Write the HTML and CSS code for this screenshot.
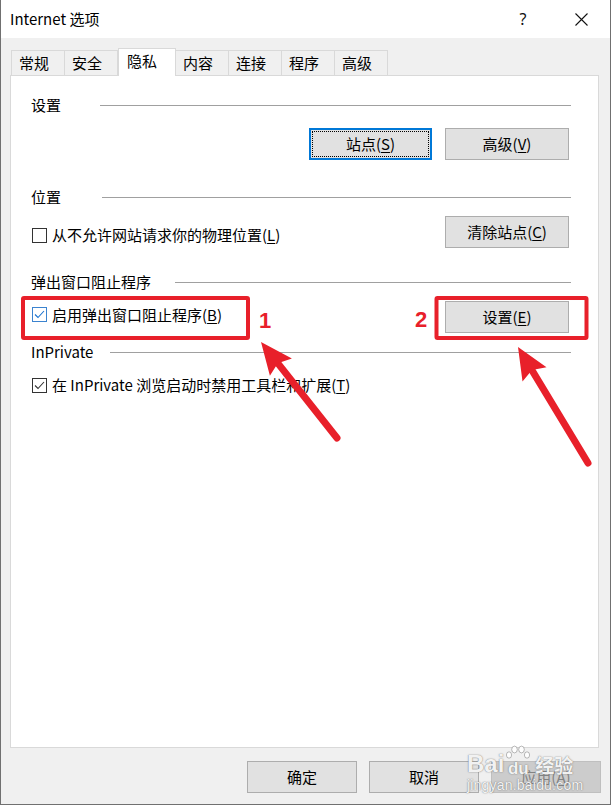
FILE: index.html
```html
<!DOCTYPE html>
<html lang="zh-CN">
<head>
<meta charset="utf-8">
<title>Internet 选项</title>
<link rel="stylesheet" href="styles.css">
</head>
<body>
<div class="window">
  <div class="titlebar">
    <span class="title">Internet 选项</span>
    <span class="help">?</span>
    <svg class="close" width="13" height="13" viewBox="0 0 13 13"><path d="M0.5 0.5 L12.5 12.5 M12.5 0.5 L0.5 12.5" stroke="#111" stroke-width="1.1" fill="none"/></svg>
  </div>

  <div class="tabs">
    <div class="tab first">常规</div>
    <div class="tab">安全</div>
    <div class="tab active">隐私</div>
    <div class="tab after-active">内容</div>
    <div class="tab">连接</div>
    <div class="tab">程序</div>
    <div class="tab">高级</div>
  </div>

  <div class="panel">
    <div class="group-head gh-1"><span class="label l-settings">设置</span><span class="rule"></span></div>
    <div class="row row-right r-1">
      <div class="btn btn-default w-sites">站点(<u>S</u>)</div>
      <div class="btn w-adv">高级(<u>V</u>)</div>
    </div>

    <div class="group-head gh-2"><span class="label l-location">位置</span><span class="rule"></span></div>
    <div class="row row-split r-2">
      <label class="check check-low"><span class="box"></span><span>从不允许网站请求你的物理位置(<u>L</u>)</span></label>
      <div class="btn w-side">清除站点(<u>C</u>)</div>
    </div>

    <div class="group-head gh-3"><span class="label l-popup">弹出窗口阻止程序</span><span class="rule"></span></div>
    <div class="row row-split r-3">
      <label class="check check-high"><span class="box checked focus"><svg width="13" height="13" viewBox="0 0 13 13"><path d="M2 6.5 L5 9.5 L11 3" stroke="#1a73d0" stroke-width="1.1" fill="none"/></svg></span><span>启用弹出窗口阻止程序(<u>B</u>)</span></label>
      <div class="btn w-side">设置(<u>E</u>)</div>
    </div>

    <div class="group-head gh-4"><span class="label l-inprivate">InPrivate</span><span class="rule"></span></div>
    <div class="row r-4">
      <label class="check"><span class="box checked"><svg width="13" height="13" viewBox="0 0 13 13"><path d="M2 6.5 L5 9.5 L11 3" stroke="#333" stroke-width="1.1" fill="none"/></svg></span><span>在 InPrivate 浏览启动时禁用工具栏和扩展(<u>T</u>)</span></label>
    </div>
  </div>

  <div class="footer">
    <div class="btn dlg">确定</div>
    <div class="btn dlg">取消</div>
    <div class="btn dlg disabled">应用(<u>A</u>)</div>
  </div>

  <svg class="annot" width="611" height="805" viewBox="0 0 611 805">
    <rect x="23" y="298" width="225" height="40" rx="1" fill="none" stroke="#e8202a" stroke-width="4"/>
    <rect x="436.5" y="298" width="150" height="40" rx="1" fill="none" stroke="#e8202a" stroke-width="4"/>
    <text x="259" y="328" class="num">1</text>
    <text x="415" y="327" class="num">2</text>
    <line x1="273.4" y1="357.7" x2="337" y2="438" stroke="#e8202a" stroke-width="7" stroke-linecap="round"/>
    <polygon points="261,342 269.9,375.8 277.8,363.2 291.9,358.4" fill="#e8202a"/>
    <line x1="528.3" y1="364.1" x2="588" y2="463" stroke="#e8202a" stroke-width="7" stroke-linecap="round"/>
    <polygon points="518,347 522.5,381.6 532,370.1 546.5,367.2" fill="#e8202a"/>
  </svg>

  <div class="watermark">
    <div class="wm-top">
      <span class="wm-bai">Bai</span>
      <span class="wm-paw">
        <svg width="26" height="16" viewBox="0 0 26 16">
          <ellipse cx="4" cy="10" rx="2.6" ry="3.2" fill="rgba(255,255,255,0.9)" stroke="rgba(110,110,110,0.6)" stroke-width="0.8"/>
          <ellipse cx="9.5" cy="4.5" rx="2.8" ry="3.4" fill="rgba(255,255,255,0.9)" stroke="rgba(110,110,110,0.6)" stroke-width="0.8"/>
          <ellipse cx="16.5" cy="4.5" rx="2.8" ry="3.4" fill="rgba(255,255,255,0.9)" stroke="rgba(110,110,110,0.6)" stroke-width="0.8"/>
          <ellipse cx="22" cy="10" rx="2.6" ry="3.2" fill="rgba(255,255,255,0.9)" stroke="rgba(110,110,110,0.6)" stroke-width="0.8"/>
        </svg>
        <span class="wm-du">du</span>
      </span>
      <span class="wm-jy">经验</span>
    </div>
    <div class="wm-url">jingyan.baidu.com</div>
  </div>
</div>
</body>
</html>
```

FILE: styles.css
```css
* { box-sizing: border-box; }
html, body { margin: 0; padding: 0; }
body {
  width: 611px;
  height: 805px;
  overflow: hidden;
  background: #f0f0f0;
  font-family: "Noto Sans CJK SC", "Noto Sans", sans-serif;
  font-size: 15px;
  color: #000;
}
u { text-decoration: underline; text-underline-offset: 2px; text-decoration-thickness: 1px; }

.window {
  position: relative;
  width: 611px;
  height: 805px;
  background: #f0f0f0;
  border-left: 1px solid #707070;
  border-right: 1px solid #707070;
  border-bottom: 1px solid #707070;
}

/* title bar */
.titlebar {
  height: 38px;
  background: #fff;
  display: flex;
  align-items: center;
  padding: 0 22px 0 9px;
}
.title { flex: 1; font-size: 15px; line-height: 20px; }
.help {
  width: 16px;
  text-align: center;
  font-family: "Noto Sans", sans-serif;
  font-size: 16px;
  line-height: 20px;
  margin-right: 44px;
  color: #111;
}
.close { display: block; }

/* tabs */
.tabs {
  position: relative;
  z-index: 2;
  display: flex;
  align-items: flex-end;
  height: 25px;
  margin-top: 12px;
  padding-left: 10px;
}
.tab {
  width: 54px;
  height: 25px;
  margin-left: -1px;
  border: 1px solid #d9d9d9;
  border-bottom: none;
  background: #f0f0f0;
  padding-left: 7px;
  line-height: 24px;
  font-size: 15px;
  white-space: nowrap;
}
.tab.first { margin-left: 0; }
.tab.active {
  width: 58px;
  height: 28px;
  margin-left: 0;
  margin-bottom: -1px;
  background: #fff;
  padding-left: 8px;
}
.tab.after-active { margin-left: -1px; }

/* panel */
.panel {
  width: 589px;
  height: 673px;
  margin-left: 9px;
  background: #fff;
  border: 1px solid #d9d9d9;
  padding: 0 0 0 20px;
}
.group-head {
  display: flex;
  align-items: center;
  height: 20px;
  margin-right: 27px;
  line-height: 20px;
}
.label { flex: none; }
.l-settings { width: 69px; }
.l-location { width: 71px; }
.l-popup { width: 144px; }
.l-inprivate { width: 79px; }
.rule { flex: 1; height: 1px; background: #a0a0a0; }

.gh-1 { margin-top: 19px; }
.r-1 { margin-top: 13px; }
.gh-2 { margin-top: 27px; }
.r-2 { margin-top: 9px; }
.gh-3 { margin-top: 24px; }
.r-3 { margin-top: 9px; }
.gh-4 { margin-top: 9px; }
.r-4 { margin-top: 13px; }

.row { display: flex; align-items: center; margin-right: 29px; }
.row-right { justify-content: flex-end; gap: 13px; }
.row-split { justify-content: space-between; }

.btn {
  display: flex;
  align-items: center;
  justify-content: center;
  height: 32px;
  background: #e1e1e1;
  border: 1px solid #adadad;
  font-size: 15px;
  line-height: 20px;
  white-space: nowrap;
}
.btn-default {
  border: 2px solid #0078d7;
  outline: 1px dotted #000;
  outline-offset: -4px;
}
.w-sites { width: 123px; }
.w-adv { width: 124px; }
.w-side { width: 124px; }

.check {
  display: flex;
  align-items: center;
  height: 20px;
  line-height: 20px;
  padding-left: 1px;
  white-space: nowrap;
}
.check-low { margin-top: 6px; }
.check-high { margin-bottom: 5px; }
.box {
  flex: none;
  width: 15px;
  height: 15px;
  border: 1px solid #333;
  background: #fff;
  margin-right: 5px;
  display: flex;
  align-items: center;
  justify-content: center;
}
.box.focus { border-color: #3b83cf; }
.box svg { display: block; }

/* footer */
.footer {
  display: flex;
  justify-content: flex-end;
  gap: 12px;
  margin-top: 13px;
  padding-right: 9px;
}
.btn.dlg { width: 110px; }
.btn.disabled { background: #cccccc; border-color: #bfbfbf; color: #838383; }

/* annotations */
.annot {
  position: absolute;
  left: -1px;
  top: 0;
  pointer-events: none;
}
.num {
  font-family: "Liberation Sans", Arial, sans-serif;
  font-weight: bold;
  font-size: 22px;
  fill: #e8202a;
}

/* watermark */
.watermark {
  position: absolute;
  left: 466px;
  top: 744px;
  width: 120px;
  color: rgba(255, 255, 255, 0.92);
  text-shadow: 0 0 1px rgba(100, 100, 100, 0.85), 0 0 2px rgba(100, 100, 100, 0.35);
  pointer-events: none;
}
.wm-top { display: flex; align-items: flex-end; height: 33px; }
.wm-bai {
  font-family: "Liberation Sans", Arial, sans-serif;
  font-weight: bold;
  font-size: 24px;
  line-height: 26px;
}
.wm-paw {
  display: flex;
  flex-direction: column;
  align-items: center;
  width: 28px;
}
.wm-paw svg { display: block; }
.wm-du {
  font-family: "Liberation Sans", Arial, sans-serif;
  font-weight: bold;
  font-size: 17px;
  line-height: 16px;
}
.wm-jy {
  font-size: 19px;
  line-height: 24px;
  margin-left: 3px;
  font-weight: bold;
}
.wm-url {
  font-family: "Liberation Sans", Arial, sans-serif;
  font-size: 14px;
  line-height: 16px;
  letter-spacing: 0.2px;
}
```
